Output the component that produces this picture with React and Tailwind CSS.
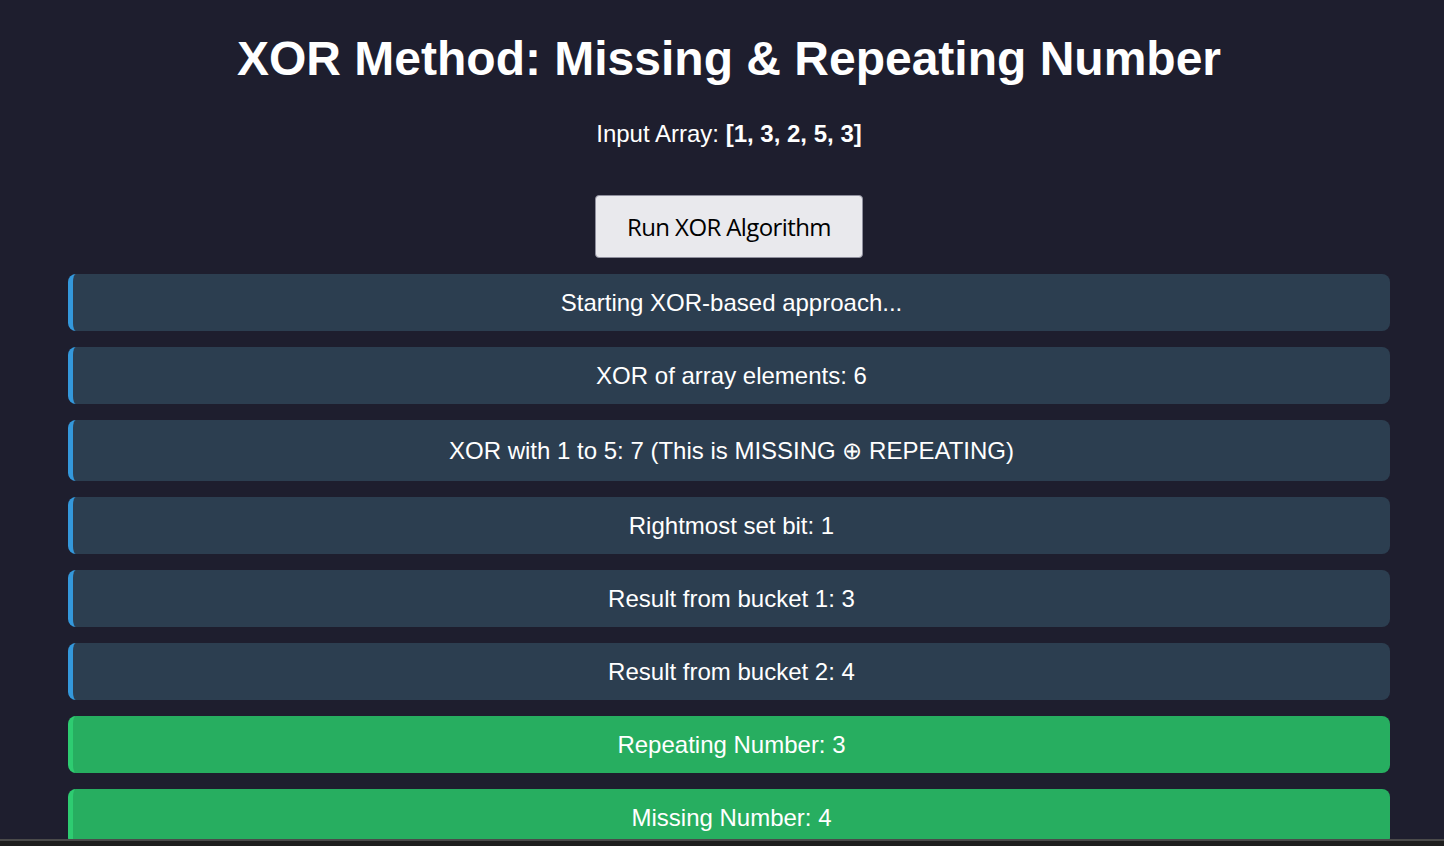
import React from 'react'

const steps = [
  { text: 'Starting XOR-based approach...' },
  { text: 'XOR of array elements: 6' },
  { text: 'XOR with 1 to 5: 7 (This is MISSING ⊕ REPEATING)', tall: true },
  { text: 'Rightmost set bit: 1' },
  { text: 'Result from bucket 1: 3' },
  { text: 'Result from bucket 2: 4' },
  { text: 'Repeating Number: 3', ok: true },
  { text: 'Missing Number: 4', ok: true },
]

const App = () => {
  return (
    <div className="min-h-screen bg-[#1e1e2e] text-white font-['Liberation_Sans',Arial,sans-serif]">
      <div className="pl-[68px] pr-[54px] pt-[31px] pb-10 flex flex-col items-center">
        {/* Header */}
        <h1 className="text-[48px] leading-[55px] font-bold">XOR Method: Missing &amp; Repeating Number</h1>
        <p className="mt-[34px] text-[24px] leading-[28px]">
          Input Array: <strong className="font-bold">[1, 3, 2, 5, 3]</strong>
        </p>

        <button className="mt-[47px] w-[268px] h-[63px] bg-[#e9e9ed] text-black border border-[#8f8f9d] rounded-[4px] text-[24px] font-['Open_Sans','Noto_Sans',sans-serif] tracking-[-0.6px]">
          Run XOR Algorithm
        </button>

        {/* Steps */}
        <div className="mt-4 w-full flex flex-col gap-4">
          {steps.map((s, i) => (
            <div
              key={i}
              className={
                s.ok
                  ? 'rounded-lg border-l-[5px] border-[#2ecc71] bg-[#27ae60] py-[15px] text-center text-[24px] leading-[27px]'
                  : s.tall
                  ? 'rounded-lg border-l-[5px] border-[#3498db] bg-[#2c3e50] py-[17px] text-center text-[24px] leading-[27px]'
                  : 'rounded-lg border-l-[5px] border-[#3498db] bg-[#2c3e50] py-[15px] text-center text-[24px] leading-[27px]'
              }
            >
              {s.text}
            </div>
          ))}
        </div>
      </div>

      {/* window bottom edge */}
      <div className="fixed bottom-0 left-0 right-0 h-[7px] bg-[#1e1e1e] border-t-2 border-[#4a4a4a]" />
    </div>
  )
}

export default App
